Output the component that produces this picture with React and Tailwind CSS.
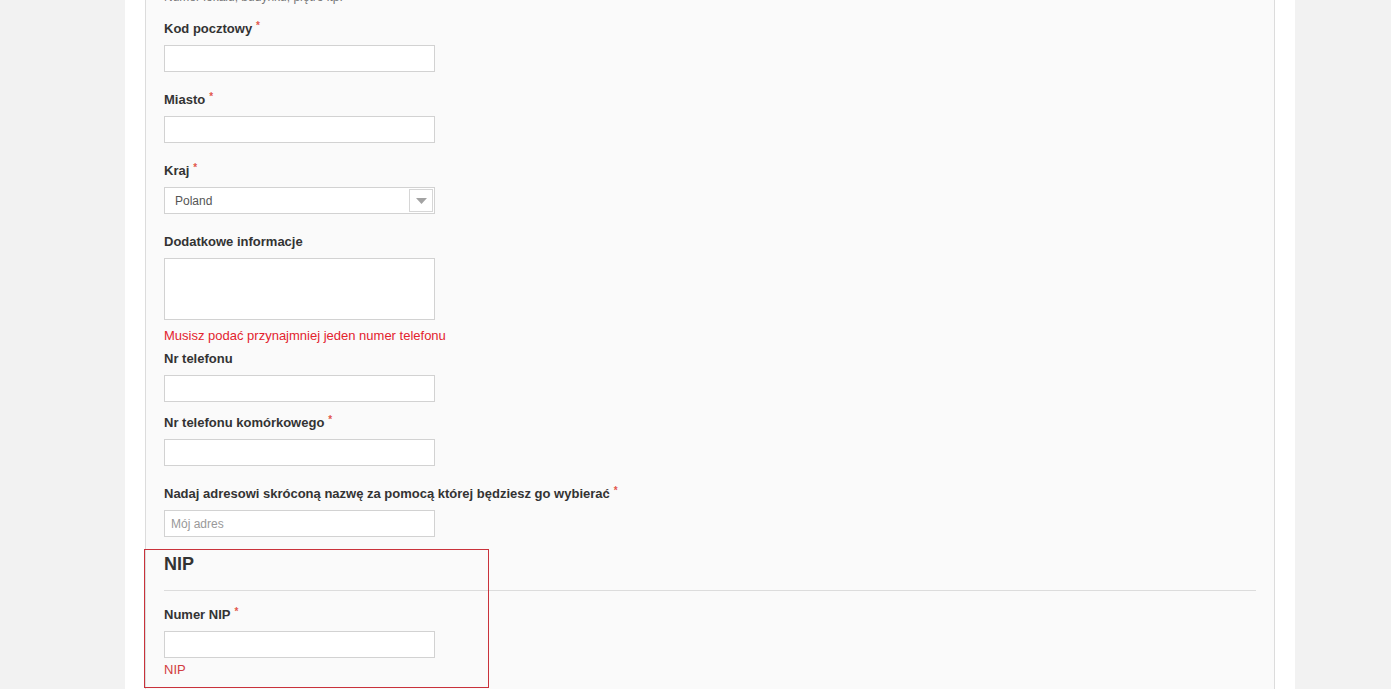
import React from 'react';

const font = { fontFamily: '"Liberation Sans", Arial, Helvetica, sans-serif' };

// Red required marker next to a label
const Req = () => (
  <span className="ml-[4px] relative -top-[4px] text-[10px] text-[#e2574c]">*</span>
);

const Label = ({ children, required }) => (
  <div className="h-[20px] pt-[2px] leading-[18px] text-[13px] font-bold text-[#333] whitespace-nowrap">
    {children}
    {required && <Req />}
  </div>
);

const Input = ({ placeholder }) => (
  <input
    type="text"
    placeholder={placeholder}
    className="block w-[271px] h-[27px] bg-white border border-[#d2d2d2] px-[6px] text-[12px] text-[#555] placeholder:text-[#999] outline-none"
    style={font}
  />
);

const Field = ({ label, required, placeholder, tight }) => (
  <div className={tight ? 'mb-[10px]' : 'mb-[17px]'}>
    <Label required={required}>{label}</Label>
    <div className="mt-[7px]">
      <Input placeholder={placeholder} />
    </div>
  </div>
);

const CountrySelect = () => (
  <div className="mt-[7px] flex items-center w-[271px] h-[27px] bg-white border border-[#d2d2d2] pl-[10px] pr-[1px]">
    <span className="flex-1 text-[12px] text-[#555]">Poland</span>
    <div className="w-[24px] h-[23px] border border-[#d6d6d6] bg-white flex items-center justify-center">
      <svg width="11" height="6" viewBox="0 0 11 6">
        <path d="M0 0h11L5.5 6z" fill="#a3a3a3" />
      </svg>
    </div>
  </div>
);

export default function App() {
  return (
    <div className="min-h-screen bg-[#f2f2f2]" style={font}>
      <div className="ml-[125px] w-[1170px] bg-white px-[20px] min-h-screen">
        <div className="flex flex-col bg-[#fafafa] border-x border-b border-[#dcdcdc] px-[18px] pb-[40px]">
          <div className="-mt-[12px] h-[18px] leading-[18px] text-[12px] text-[#777]">
            Numer lokalu, budynku, piętro itp.
          </div>

          <div className="mt-[12px]">
            <Field label="Kod pocztowy" required />
            <Field label="Miasto" required />

            <div className="mb-[17px]">
              <Label required>Kraj</Label>
              <CountrySelect />
            </div>

            <div>
              <Label>Dodatkowe informacje</Label>
              <textarea
                className="block mt-[7px] w-[271px] h-[62px] bg-white border border-[#d2d2d2] resize-none outline-none"
              />
            </div>

            <div className="mt-[7px] h-[18px] leading-[18px] text-[13px] text-[#e3232e]">
              Musisz podać przynajmniej jeden numer telefonu
            </div>

            <div className="mt-[3px]">
              <Field label="Nr telefonu" tight />
              <Field label="Nr telefonu komórkowego" required />
              <Field
                label="Nadaj adresowi skróconą nazwę za pomocą której będziesz go wybierać"
                required
                placeholder="Mój adres"
              />
            </div>
          </div>

          <div className="relative">
            <div className="h-[21px] leading-[20px] text-[18px] font-bold text-[#333]">NIP</div>
            <div className="mt-[15px] h-px bg-[#dcdcdc]" />
            <div className="mt-[13px]">
              <Label required>Numer NIP</Label>
              <div className="mt-[7px]">
                <Input />
              </div>
              <div className="mt-[2px] h-[20px] leading-[20px] text-[13px] text-[#d23c40]">NIP</div>
            </div>

            {/* highlight frame drawn over the NIP block */}
            <div className="absolute -left-[20px] -top-[5px] w-[345px] h-[139px] border border-[#c9323b] pointer-events-none" />
          </div>
        </div>
      </div>
    </div>
  );
}
